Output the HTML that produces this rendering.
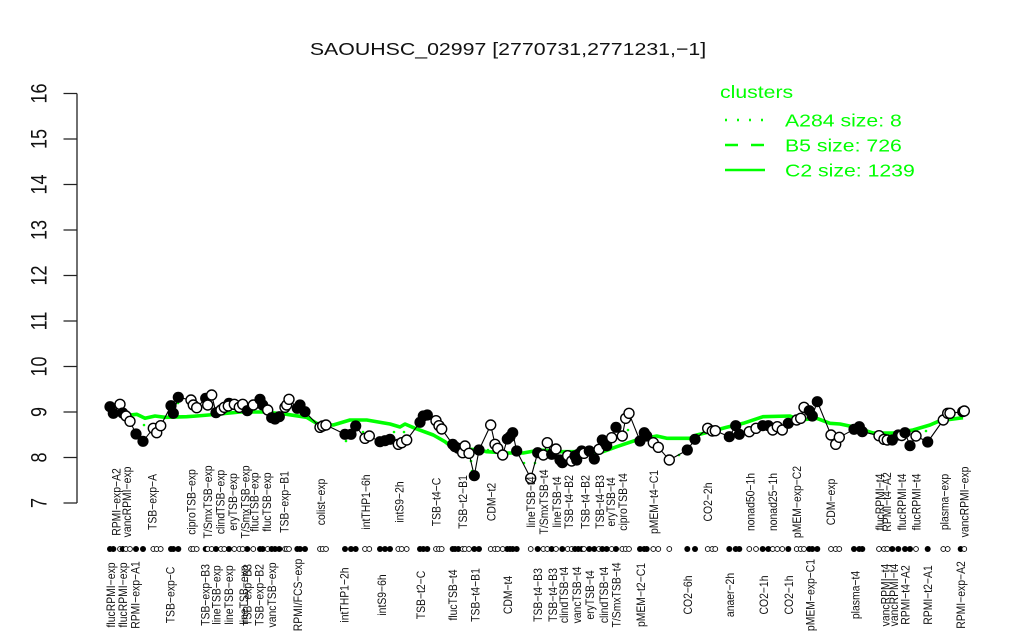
<!DOCTYPE html>
<html><head><meta charset="utf-8"><style>
html,body{margin:0;padding:0;background:#fff}
svg{display:block;font-family:"Liberation Sans",sans-serif;filter:blur(.3px)}
.l text{font-size:10.4px;text-anchor:middle;fill:#111}
.a text{font-size:18px;text-anchor:middle;fill:#111}
.p circle{r:5px;fill:#fff;stroke:#000;stroke-width:1.4}
.p circle.b{r:5.6px;fill:#000;stroke:none}
.d circle{r:2.4px;fill:#fff;stroke:#000;stroke-width:.9}
.d circle.b{r:3px;fill:#000;stroke:none}
</style></head><body>
<svg width="1024" height="640" viewBox="0 0 1024 640" xmlns="http://www.w3.org/2000/svg">
<rect width="1024" height="640" fill="#fff"/>
<text transform="translate(508,55) scale(1.185,1)" font-size="18" text-anchor="middle" fill="#111">SAOUHSC_02997 [2770731,2771231,−1]</text>
<path d="M77 93.5V503M63.5 93.5H77M63.5 139H77M63.5 184.500H77M63.500 230H77M63.5 275.500H77M63.5 321H77M63.500 366.500H77M63.500 412H77M63.500 457.500H77M63.500 503H77" stroke="#222" stroke-width="1.3" fill="none"/>
<g class="a">
<text transform="translate(46.500,93.500) rotate(-90) scale(1,1.22)">16</text>
<text transform="translate(46.500,139) rotate(-90) scale(1,1.22)">15</text>
<text transform="translate(46.500,184.500) rotate(-90) scale(1,1.22)">14</text>
<text transform="translate(46.500,230) rotate(-90) scale(1,1.22)">13</text>
<text transform="translate(46.500,275.500) rotate(-90) scale(1,1.22)">12</text>
<text transform="translate(46.500,321) rotate(-90) scale(1,1.22)">11</text>
<text transform="translate(46.500,366.500) rotate(-90) scale(1,1.22)">10</text>
<text transform="translate(46.500,412) rotate(-90) scale(1,1.22)">9</text>
<text transform="translate(46.500,457.500) rotate(-90) scale(1,1.22)">8</text>
<text transform="translate(46.500,503) rotate(-90) scale(1,1.22)">7</text>
</g>
<g fill="#0f0" font-size="18">
<text transform="translate(720,98) scale(1.18,1)">clusters</text>
<text transform="translate(785,126.500) scale(1.18,1)">A284 size: 8</text>
<text transform="translate(785,151.500) scale(1.18,1)">B5 size: 726</text>
<text transform="translate(785,176.500) scale(1.18,1)">C2 size: 1239</text>
</g>
<path d="M725 120H765" stroke="#0f0" stroke-width="2.4" stroke-dasharray="2 10" fill="none"/>
<path d="M725 145H765" stroke="#0f0" stroke-width="2.4" stroke-dasharray="13 13" fill="none"/>
<path d="M725 170H765" stroke="#0f0" stroke-width="2.4" fill="none"/>
<polyline fill="none" stroke="#0f0" stroke-width="3.600" stroke-linejoin="round" points="112,413 123,415.700 136.700,414.300 145,418.300 155,416 165,417.300 186.700,416.700 196.700,416 220,414 240,412 265,412 286.700,414.300 306.700,417.300 318.300,424.300 333.300,425 350,420 366.700,420 390,424 400,427 405,424 415,428.300 433.300,435 445,441.700 453,448 480,450 486.700,451.700 506.700,453 523,453 540,450 560,451.700 573,451.700 603,451.700 616.700,446.700 636.700,440 656.700,436 666.700,438.300 690,438.300 696.700,435 710,431.700 726.700,427.300 743.300,423.300 763,416.700 790,416 800,420 816.700,418.300 830,423.300 840,424 853,426.700 873,433 893,433 913,430 930,425 940,420.700 963,417.700"/>
<g fill="#0f0"><circle cx="144" cy="425" r="1.300"/><circle cx="178" cy="403" r="1.300"/><circle cx="346" cy="441" r="1.300"/><circle cx="363" cy="432" r="1.300"/><circle cx="394" cy="432" r="1.300"/><circle cx="404" cy="432" r="1.300"/><circle cx="472" cy="471" r="1.300"/><circle cx="488" cy="450" r="1.300"/><circle cx="471" cy="461" r="1.300"/><circle cx="524" cy="463" r="1.300"/><circle cx="535" cy="463" r="1.300"/><circle cx="628" cy="430" r="1.300"/><circle cx="679" cy="455" r="1.300"/><circle cx="785" cy="421" r="1.300"/><circle cx="926" cy="431" r="1.300"/></g>
<polyline fill="none" stroke="#000" stroke-width="1.100" stroke-linejoin="round" points="110,406.700 113.300,413.300 120,404.300 122.700,413 126,416 130,421.300 136,434 143,441.300 153.300,428.300 156.700,432.700 160.700,425.700 171,405.700 173.300,413.300 178.300,397.300 191,400 193.300,405 196.700,407.700 205.700,398.300 207.700,405 211.700,395 216,412.700 221,410 224.300,407.300 229,403.300 234.300,404.300 239.300,407.300 242.700,404.300 247.300,410.700 253.300,405 260,399.300 262.700,405 267.700,410 271.700,417.700 275,419 279.300,416.700 285,407.300 286.700,405 289,399.300 297.300,408.300 300,405 305,411.700 320,427.300 322.700,426 326,425 345,434.300 351,434.300 355.700,426 365,438.300 369.300,436 380,441.700 385,440.700 390,439.300 398.300,444.300 401.700,442.700 406.700,440 420,422.300 423.300,416 427.300,415 436,420.700 439,425.700 441.700,429 452.700,444.300 455,446.700 458.300,448.300 462.700,452.700 465,446 469,453.300 474.300,475.700 479,450 490.700,425 495,444.300 497.700,448.300 502.700,455 507.300,439 510,436.700 512.700,432.700 516.700,451 530.700,478.300 537.700,452.700 543.300,455 547.300,442.700 551.700,454.300 556,449 560,460 562.300,462.700 567.700,455.700 571.700,461 575,456 576.700,460 578.300,454.300 581.700,451 584,453.300 589.300,451 594.300,459 599,449.300 602.300,440 605,442.700 606.700,445.700 611.700,437.700 616,427.300 622.300,436 625.700,418.300 629,413.300 640,441 644.300,432.700 646.700,436 653.300,442.700 658.300,447.300 669.300,460 687.300,450 695,439.300 707.700,428.300 712.300,431 715.300,430.700 729.300,436.700 735.700,425.700 739.300,434.300 749.300,431.700 756,428.300 762.700,425.700 768.300,425.700 772.700,430 777.300,426.700 782.300,430 788.300,423.300 796.700,420 800.700,418.300 804,407.300 809.300,410.700 812.300,416 817.300,401.700 831,435 835.700,444.300 839.300,437.300 854,429.300 859.300,426.700 862.300,431.700 879,435.700 884,439.300 887.300,440 892.300,440 898.300,435 905,432.700 910,445.700 916,436 927.700,442 943.300,420 947.700,413.300 950,413.300 962.700,411.700 964.300,411"/>
<g class="p">
<circle class="b" cx="110" cy="406.700"/><circle class="b" cx="113.300" cy="413.300"/><circle cx="120" cy="404.300"/><circle class="b" cx="122.700" cy="413"/><circle cx="126" cy="416"/><circle cx="130" cy="421.300"/><circle class="b" cx="136" cy="434"/><circle class="b" cx="143" cy="441.300"/><circle cx="153.300" cy="428.300"/><circle cx="156.700" cy="432.700"/><circle cx="160.700" cy="425.700"/><circle class="b" cx="171" cy="405.700"/><circle class="b" cx="173.300" cy="413.300"/><circle class="b" cx="178.300" cy="397.300"/><circle cx="191" cy="400"/><circle cx="193.300" cy="405"/><circle cx="196.700" cy="407.700"/><circle class="b" cx="205.700" cy="398.300"/><circle cx="207.700" cy="405"/><circle cx="211.700" cy="395"/><circle class="b" cx="216" cy="412.700"/><circle cx="221" cy="410"/><circle cx="224.300" cy="407.300"/><circle class="b" cx="229" cy="403.300"/><circle cx="228.300" cy="406"/><circle cx="234.300" cy="404.300"/><circle cx="239.300" cy="407.300"/><circle cx="242.700" cy="404.300"/><circle class="b" cx="247.300" cy="410.700"/><circle cx="253.300" cy="405"/><circle class="b" cx="260" cy="399.300"/><circle class="b" cx="262.700" cy="405"/><circle cx="267.700" cy="410"/><circle class="b" cx="271.700" cy="417.700"/><circle class="b" cx="275" cy="419"/><circle class="b" cx="279.300" cy="416.700"/><circle cx="285" cy="407.300"/><circle cx="286.700" cy="405"/><circle cx="289" cy="399.300"/><circle class="b" cx="297.300" cy="408.300"/><circle class="b" cx="300" cy="405"/><circle class="b" cx="305" cy="411.700"/><circle cx="320" cy="427.300"/><circle cx="322.700" cy="426"/><circle cx="326" cy="425"/><circle class="b" cx="345" cy="434.300"/><circle class="b" cx="351" cy="434.300"/><circle class="b" cx="355.700" cy="426"/><circle cx="365" cy="438.300"/><circle cx="369.300" cy="436"/><circle class="b" cx="380" cy="441.700"/><circle class="b" cx="385" cy="440.700"/><circle class="b" cx="390" cy="439.300"/><circle cx="398.300" cy="444.300"/><circle cx="401.700" cy="442.700"/><circle cx="406.700" cy="440"/><circle class="b" cx="420" cy="422.300"/><circle class="b" cx="423.300" cy="416"/><circle class="b" cx="427.300" cy="415"/><circle cx="436" cy="420.700"/><circle cx="439" cy="425.700"/><circle cx="441.700" cy="429"/><circle class="b" cx="452.700" cy="444.300"/><circle class="b" cx="455" cy="446.700"/><circle class="b" cx="458.300" cy="448.300"/><circle cx="462.700" cy="452.700"/><circle cx="465" cy="446"/><circle cx="469" cy="453.300"/><circle class="b" cx="474.300" cy="475.700"/><circle class="b" cx="479" cy="450"/><circle cx="490.700" cy="425"/><circle cx="495" cy="444.300"/><circle cx="497.700" cy="448.300"/><circle cx="502.700" cy="455"/><circle class="b" cx="507.300" cy="439"/><circle class="b" cx="510" cy="436.700"/><circle class="b" cx="512.700" cy="432.700"/><circle class="b" cx="516.700" cy="451"/><circle cx="530.700" cy="478.300"/><circle class="b" cx="537.700" cy="452.700"/><circle cx="543.300" cy="455"/><circle cx="547.300" cy="442.700"/><circle class="b" cx="551.700" cy="454.300"/><circle cx="556" cy="449"/><circle class="b" cx="560" cy="460"/><circle class="b" cx="562.300" cy="462.700"/><circle cx="567.700" cy="455.700"/><circle cx="571.700" cy="461"/><circle class="b" cx="575" cy="456"/><circle class="b" cx="576.700" cy="460"/><circle class="b" cx="578.300" cy="454.300"/><circle class="b" cx="581.700" cy="451"/><circle cx="584" cy="453.300"/><circle class="b" cx="589.300" cy="451"/><circle class="b" cx="594.300" cy="459"/><circle cx="599" cy="449.300"/><circle class="b" cx="602.300" cy="440"/><circle class="b" cx="605" cy="442.700"/><circle class="b" cx="606.700" cy="445.700"/><circle cx="611.700" cy="437.700"/><circle class="b" cx="616" cy="427.300"/><circle cx="622.300" cy="436"/><circle cx="625.700" cy="418.300"/><circle cx="629" cy="413.300"/><circle class="b" cx="640" cy="441"/><circle class="b" cx="644.300" cy="432.700"/><circle class="b" cx="646.700" cy="436"/><circle cx="653.300" cy="442.700"/><circle cx="658.300" cy="447.300"/><circle cx="669.300" cy="460"/><circle class="b" cx="687.300" cy="450"/><circle class="b" cx="695" cy="439.300"/><circle cx="707.700" cy="428.300"/><circle cx="712.300" cy="431"/><circle cx="715.300" cy="430.700"/><circle class="b" cx="729.300" cy="436.700"/><circle class="b" cx="735.700" cy="425.700"/><circle class="b" cx="739.300" cy="434.300"/><circle cx="749.300" cy="431.700"/><circle cx="756" cy="428.300"/><circle class="b" cx="762.700" cy="425.700"/><circle class="b" cx="768.300" cy="425.700"/><circle cx="772.700" cy="430"/><circle cx="777.300" cy="426.700"/><circle cx="782.300" cy="430"/><circle class="b" cx="788.300" cy="423.300"/><circle cx="796.700" cy="420"/><circle cx="800.700" cy="418.300"/><circle cx="804" cy="407.300"/><circle class="b" cx="809.300" cy="410.700"/><circle class="b" cx="812.300" cy="416"/><circle class="b" cx="817.300" cy="401.700"/><circle cx="831" cy="435"/><circle cx="835.700" cy="444.300"/><circle cx="839.300" cy="437.300"/><circle class="b" cx="854" cy="429.300"/><circle class="b" cx="859.300" cy="426.700"/><circle class="b" cx="862.300" cy="431.700"/><circle cx="879" cy="435.700"/><circle cx="884" cy="439.300"/><circle cx="887.300" cy="440"/><circle class="b" cx="892.300" cy="440"/><circle class="b" cx="898.300" cy="435"/><circle cx="901.700" cy="435.500"/><circle class="b" cx="905" cy="432.700"/><circle class="b" cx="910" cy="445.700"/><circle cx="916" cy="436"/><circle class="b" cx="927.700" cy="442"/><circle cx="943.300" cy="420"/><circle cx="947.700" cy="413.300"/><circle cx="950" cy="413.300"/><circle class="b" cx="962.700" cy="411.700"/><circle cx="964.300" cy="411"/>
</g>
<g class="d">
<circle class="b" cx="110" cy="549"/><circle class="b" cx="113.300" cy="549"/><circle cx="120" cy="549"/><circle class="b" cx="122.700" cy="549"/><circle cx="126" cy="549"/><circle cx="130" cy="549"/><circle class="b" cx="136" cy="549"/><circle class="b" cx="143" cy="549"/><circle cx="153.300" cy="549"/><circle cx="156.700" cy="549"/><circle cx="160.700" cy="549"/><circle class="b" cx="171" cy="549"/><circle class="b" cx="173.300" cy="549"/><circle class="b" cx="178.300" cy="549"/><circle cx="191" cy="549"/><circle cx="193.300" cy="549"/><circle cx="196.700" cy="549"/><circle class="b" cx="205.700" cy="549"/><circle cx="207.700" cy="549"/><circle cx="211.700" cy="549"/><circle class="b" cx="216" cy="549"/><circle cx="221" cy="549"/><circle cx="224.300" cy="549"/><circle class="b" cx="229" cy="549"/><circle cx="234.300" cy="549"/><circle cx="239.300" cy="549"/><circle cx="242.700" cy="549"/><circle class="b" cx="247.300" cy="549"/><circle cx="253.300" cy="549"/><circle class="b" cx="260" cy="549"/><circle class="b" cx="262.700" cy="549"/><circle cx="267.700" cy="549"/><circle class="b" cx="271.700" cy="549"/><circle class="b" cx="275" cy="549"/><circle class="b" cx="279.300" cy="549"/><circle cx="285" cy="549"/><circle cx="286.700" cy="549"/><circle cx="289" cy="549"/><circle class="b" cx="297.300" cy="549"/><circle class="b" cx="300" cy="549"/><circle class="b" cx="305" cy="549"/><circle cx="320" cy="549"/><circle cx="322.700" cy="549"/><circle cx="326" cy="549"/><circle class="b" cx="345" cy="549"/><circle class="b" cx="351" cy="549"/><circle class="b" cx="355.700" cy="549"/><circle cx="365" cy="549"/><circle cx="369.300" cy="549"/><circle class="b" cx="380" cy="549"/><circle class="b" cx="385" cy="549"/><circle class="b" cx="390" cy="549"/><circle cx="398.300" cy="549"/><circle cx="401.700" cy="549"/><circle cx="406.700" cy="549"/><circle class="b" cx="420" cy="549"/><circle class="b" cx="423.300" cy="549"/><circle class="b" cx="427.300" cy="549"/><circle cx="436" cy="549"/><circle cx="439" cy="549"/><circle cx="441.700" cy="549"/><circle class="b" cx="452.700" cy="549"/><circle class="b" cx="455" cy="549"/><circle class="b" cx="458.300" cy="549"/><circle cx="462.700" cy="549"/><circle cx="465" cy="549"/><circle cx="469" cy="549"/><circle class="b" cx="474.300" cy="549"/><circle class="b" cx="479" cy="549"/><circle cx="490.700" cy="549"/><circle cx="495" cy="549"/><circle cx="497.700" cy="549"/><circle cx="502.700" cy="549"/><circle class="b" cx="507.300" cy="549"/><circle class="b" cx="510" cy="549"/><circle class="b" cx="512.700" cy="549"/><circle class="b" cx="516.700" cy="549"/><circle cx="530.700" cy="549"/><circle class="b" cx="537.700" cy="549"/><circle cx="543.300" cy="549"/><circle cx="547.300" cy="549"/><circle class="b" cx="551.700" cy="549"/><circle cx="556" cy="549"/><circle class="b" cx="562.300" cy="549"/><circle cx="567.700" cy="549"/><circle cx="571.700" cy="549"/><circle class="b" cx="575" cy="549"/><circle class="b" cx="578.300" cy="549"/><circle class="b" cx="581.700" cy="549"/><circle cx="584" cy="549"/><circle class="b" cx="589.300" cy="549"/><circle class="b" cx="594.300" cy="549"/><circle cx="599" cy="549"/><circle class="b" cx="602.300" cy="549"/><circle class="b" cx="606.700" cy="549"/><circle cx="611.700" cy="549"/><circle class="b" cx="616" cy="549"/><circle cx="622.300" cy="549"/><circle cx="625.700" cy="549"/><circle cx="629" cy="549"/><circle class="b" cx="640" cy="549"/><circle class="b" cx="644.300" cy="549"/><circle class="b" cx="646.700" cy="549"/><circle cx="653.300" cy="549"/><circle cx="658.300" cy="549"/><circle cx="669.300" cy="549"/><circle class="b" cx="687.300" cy="549"/><circle class="b" cx="695" cy="549"/><circle cx="707.700" cy="549"/><circle cx="712.300" cy="549"/><circle cx="715.300" cy="549"/><circle class="b" cx="729.300" cy="549"/><circle class="b" cx="735.700" cy="549"/><circle class="b" cx="739.300" cy="549"/><circle cx="749.300" cy="549"/><circle cx="756" cy="549"/><circle class="b" cx="762.700" cy="549"/><circle class="b" cx="768.300" cy="549"/><circle cx="772.700" cy="549"/><circle cx="777.300" cy="549"/><circle cx="782.300" cy="549"/><circle class="b" cx="788.300" cy="549"/><circle cx="796.700" cy="549"/><circle cx="800.700" cy="549"/><circle cx="804" cy="549"/><circle class="b" cx="809.300" cy="549"/><circle class="b" cx="812.300" cy="549"/><circle class="b" cx="817.300" cy="549"/><circle cx="831" cy="549"/><circle cx="835.700" cy="549"/><circle cx="839.300" cy="549"/><circle class="b" cx="854" cy="549"/><circle class="b" cx="859.300" cy="549"/><circle class="b" cx="862.300" cy="549"/><circle cx="879" cy="549"/><circle cx="884" cy="549"/><circle cx="887.300" cy="549"/><circle class="b" cx="892.300" cy="549"/><circle class="b" cx="898.300" cy="549"/><circle class="b" cx="905" cy="549"/><circle class="b" cx="910" cy="549"/><circle cx="916" cy="549"/><circle class="b" cx="927.700" cy="549"/><circle cx="943.300" cy="549"/><circle cx="947.700" cy="549"/><circle class="b" cx="960.700" cy="549"/><circle cx="964.300" cy="549"/>
</g>
<g class="l">
<text transform="translate(120.500,502) rotate(-90) scale(1,1.18)">RPMI−exp−A2</text>
<text transform="translate(131.200,502) rotate(-90) scale(1,1.18)">vancRPMI−exp</text>
<text transform="translate(156.500,502) rotate(-90) scale(1,1.18)">TSB−exp−A</text>
<text transform="translate(195.500,502) rotate(-90) scale(1,1.18)">ciproTSB−exp</text>
<text transform="translate(211.800,502) rotate(-90) scale(1,1.18)">T/SmxTSB−exp</text>
<text transform="translate(224.500,502) rotate(-90) scale(1,1.18)">clindTSB−exp</text>
<text transform="translate(236.800,502) rotate(-90) scale(1,1.18)">eryTSB−exp</text>
<text transform="translate(249.500,502) rotate(-90) scale(1,1.18)">T/SmxTSB−exp</text>
<text transform="translate(258.500,502) rotate(-90) scale(1,1.18)">flucTSB−exp</text>
<text transform="translate(271.200,502) rotate(-90) scale(1,1.18)">flucTSB−exp</text>
<text transform="translate(288.500,502) rotate(-90) scale(1,1.18)">TSB−exp−B1</text>
<text transform="translate(325.200,502) rotate(-90) scale(1,1.18)">colist−exp</text>
<text transform="translate(370.200,502) rotate(-90) scale(1,1.18)">intTHP1−6h</text>
<text transform="translate(403.500,502) rotate(-90) scale(1,1.18)">intS9−2h</text>
<text transform="translate(440.500,502) rotate(-90) scale(1,1.18)">TSB−t4−C</text>
<text transform="translate(467.200,502) rotate(-90) scale(1,1.18)">TSB−t2−B1</text>
<text transform="translate(495.500,502) rotate(-90) scale(1,1.18)">CDM−t2</text>
<text transform="translate(535.200,502) rotate(-90) scale(1,1.18)">lineTSB−t4</text>
<text transform="translate(547.800,502) rotate(-90) scale(1,1.18)">T/SmxTSB−t4</text>
<text transform="translate(561.200,502) rotate(-90) scale(1,1.18)">lineTSB−t4</text>
<text transform="translate(572.800,502) rotate(-90) scale(1,1.18)">TSB−t4−B2</text>
<text transform="translate(589.500,502) rotate(-90) scale(1,1.18)">TSB−t4−B2</text>
<text transform="translate(603.800,502) rotate(-90) scale(1,1.18)">TSB−t4−B3</text>
<text transform="translate(615.200,502) rotate(-90) scale(1,1.18)">eryTSB−t4</text>
<text transform="translate(627.200,502) rotate(-90) scale(1,1.18)">ciproTSB−t4</text>
<text transform="translate(657.800,502) rotate(-90) scale(1,1.18)">pMEM−t4−C1</text>
<text transform="translate(712.200,502) rotate(-90) scale(1,1.18)">CO2−2h</text>
<text transform="translate(754.500,502) rotate(-90) scale(1,1.18)">nonad50−1h</text>
<text transform="translate(777.200,502) rotate(-90) scale(1,1.18)">nonad25−1h</text>
<text transform="translate(801.200,502) rotate(-90) scale(1,1.18)">pMEM−exp−C2</text>
<text transform="translate(835.200,502) rotate(-90) scale(1,1.18)">CDM−exp</text>
<text transform="translate(883.800,502) rotate(-90) scale(1,1.18)">flucRPMI−t4</text>
<text transform="translate(891.200,502) rotate(-90) scale(1,1.18)">RPMI−t4−A2</text>
<text transform="translate(906.200,502) rotate(-90) scale(1,1.18)">flucRPMI−t4</text>
<text transform="translate(920.500,502) rotate(-90) scale(1,1.18)">flucRPMI−t4</text>
<text transform="translate(948.500,502) rotate(-90) scale(1,1.18)">plasma−exp</text>
<text transform="translate(968.500,502) rotate(-90) scale(1,1.18)">vancRPMI−exp</text>
<text transform="translate(115.200,595) rotate(-90) scale(1,1.18)">flucRPMI−exp</text>
<text transform="translate(127.200,595) rotate(-90) scale(1,1.18)">flucRPMI−exp</text>
<text transform="translate(139.500,595) rotate(-90) scale(1,1.18)">RPMI−exp−A1</text>
<text transform="translate(174.500,595) rotate(-90) scale(1,1.18)">TSB−exp−C</text>
<text transform="translate(209.500,595) rotate(-90) scale(1,1.18)">TSB−exp−B3</text>
<text transform="translate(220.500,595) rotate(-90) scale(1,1.18)">lineTSB−exp</text>
<text transform="translate(232.800,595) rotate(-90) scale(1,1.18)">lineTSB−exp</text>
<text transform="translate(247.800,595) rotate(-90) scale(1,1.18)">lineTSB−exp</text>
<text transform="translate(251.500,595) rotate(-90) scale(1,1.18)">TSB−exp−B3</text>
<text transform="translate(263.500,595) rotate(-90) scale(1,1.18)">TSB−exp−B2</text>
<text transform="translate(276.200,595) rotate(-90) scale(1,1.18)">vancTSB−exp</text>
<text transform="translate(301.800,595) rotate(-90) scale(1,1.18)">RPMI/FCS−exp</text>
<text transform="translate(348.500,595) rotate(-90) scale(1,1.18)">intTHP1−2h</text>
<text transform="translate(386.200,595) rotate(-90) scale(1,1.18)">intS9−6h</text>
<text transform="translate(425.200,595) rotate(-90) scale(1,1.18)">TSB−t2−C</text>
<text transform="translate(457.200,595) rotate(-90) scale(1,1.18)">flucTSB−t4</text>
<text transform="translate(479.500,595) rotate(-90) scale(1,1.18)">TSB−t4−B1</text>
<text transform="translate(511.800,595) rotate(-90) scale(1,1.18)">CDM−t4</text>
<text transform="translate(542.200,595) rotate(-90) scale(1,1.18)">TSB−t4−B3</text>
<text transform="translate(556.800,595) rotate(-90) scale(1,1.18)">TSB−t4−B3</text>
<text transform="translate(567.800,595) rotate(-90) scale(1,1.18)">clindTSB−t4</text>
<text transform="translate(581.200,595) rotate(-90) scale(1,1.18)">vancTSB−t4</text>
<text transform="translate(593.800,595) rotate(-90) scale(1,1.18)">eryTSB−t4</text>
<text transform="translate(607.800,595) rotate(-90) scale(1,1.18)">clindTSB−t4</text>
<text transform="translate(620.500,595) rotate(-90) scale(1,1.18)">T/SmxTSB−t4</text>
<text transform="translate(645.200,595) rotate(-90) scale(1,1.18)">pMEM−t2−C1</text>
<text transform="translate(691.800,595) rotate(-90) scale(1,1.18)">CO2−6h</text>
<text transform="translate(733.800,595) rotate(-90) scale(1,1.18)">anaer−2h</text>
<text transform="translate(767.800,595) rotate(-90) scale(1,1.18)">CO2−1h</text>
<text transform="translate(792.800,595) rotate(-90) scale(1,1.18)">CO2−1h</text>
<text transform="translate(814.500,595) rotate(-90) scale(1,1.18)">pMEM−exp−C1</text>
<text transform="translate(859.500,595) rotate(-90) scale(1,1.18)">plasma−t4</text>
<text transform="translate(889.500,595) rotate(-90) scale(1,1.18)">vancRPMI−t4</text>
<text transform="translate(897.800,595) rotate(-90) scale(1,1.18)">vancRPMI−t4</text>
<text transform="translate(909.500,595) rotate(-90) scale(1,1.18)">RPMI−t4−A2</text>
<text transform="translate(932.200,595) rotate(-90) scale(1,1.18)">RPMI−t2−A1</text>
<text transform="translate(965.200,595) rotate(-90) scale(1,1.18)">RPMI−exp−A2</text>
</g>
</svg>
</body></html>
